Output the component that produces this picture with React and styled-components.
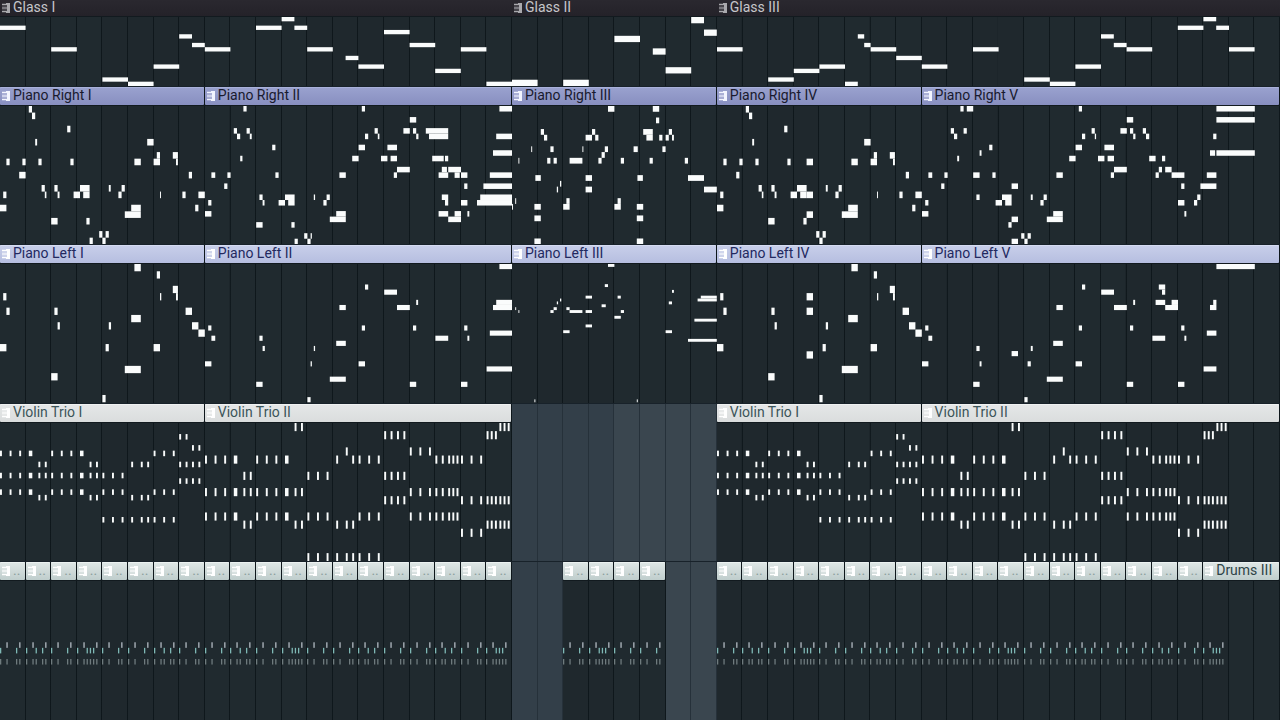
import React from "react";
import styled, { createGlobalStyle } from "styled-components";

const BARS = 50;
const STEPS_PER_BAR = 8;

const GlobalStyle = createGlobalStyle`
  * { box-sizing: border-box; }
  body { margin: 0; background: #333f49; }
`;

/* ---------- note data: [step, row, length in steps] ---------- */

const glass1 = [
  [0, 2, 8], [16, 7, 8], [32, 14, 8], [40, 15, 8], [48, 11, 8], [56, 4, 4], [60, 6, 4], [64, 7, 8],
  [80, 2, 8], [88, 0, 4], [92, 2, 4], [96, 7, 8], [108, 9, 4], [112, 11, 8], [120, 3, 8], [128, 6, 8],
  [136, 12, 8], [144, 7, 8], [152, 15, 8],
];

const glass2 = [
  [0, 10, 8], [16, 10, 8], [32, 3, 8], [44, 5, 4], [48, 8, 8], [56, 0, 4], [60, 2, 4],
];

const glass3 = [
  [0, 7, 8], [16, 14, 8], [24, 12, 8], [32, 11, 8], [40, 15, 4], [44, 4, 2], [46, 6, 2], [48, 7, 8],
  [56, 9, 8], [64, 11, 8], [80, 7, 8], [96, 14, 8], [104, 15, 8], [112, 11, 8], [120, 4, 4], [124, 6, 4],
  [128, 7, 8], [144, 2, 8], [152, 0, 4], [156, 2, 4], [160, 7, 8],
];

const rightTheme = [
  [9, 0], [10, 1], [21, 3], [11, 5, 0.6], [46, 5, 2], [2, 8], [7, 8], [12, 8], [22, 8], [42, 8, 2],
  [49, 7], [48, 8, 2], [54, 7, 1.6], [55, 8, 0.6], [59, 10], [13, 12], [14, 13, 0.5], [17, 12],
  [18, 13, 0.6], [25, 12, 3], [26, 13, 2], [23, 13, 2], [34, 12, 0.6], [38, 12], [37, 13], [1, 13],
  [50, 13, 0.3], [57, 13], [62, 13, 2], [0, 15, 2], [61, 15], [41, 15, 3], [39, 16, 5], [16, 17, 2],
  [27, 17], [31, 19], [33, 19], [32, 20],
];
const right1 = [...rightTheme, [6, 10, 2], [28, 20]];
const right4 = [...rightTheme, [6, 10], [28, 8, 2], [28, 13, 2], [28, 16, 2]];

const right2 = [
  [12, 0], [9, 4], [10, 5], [13, 4], [14, 5, 0.6], [21, 7], [11, 9, 0.7], [2, 12, 1.2], [7, 12], [22, 12],
  [6, 14], [17, 16], [18, 17, 0.6], [25, 16, 3], [26, 17, 2], [23, 17, 2], [34, 16, 0.4], [1, 17],
  [0, 19, 2], [16, 21, 2], [27, 21], [31, 23], [33, 23, 0.4], [32, 24], [28, 24],
  [38, 16], [37, 17], [41, 19, 3], [39, 20, 5], [42, 12, 2], [46, 9, 2], [48, 7, 2], [49, 0], [50, 5],
  [53, 4], [54, 5, 0.5], [55, 9, 2], [58, 9, 2], [57, 7, 3], [60, 11, 4], [59, 12], [62, 4, 2],
  [64, 2, 2], [65, 4], [66, 5, 0.7], [69, 4, 7], [70, 5, 6], [71, 9, 3.6], [75, 9], [74, 11, 1.6],
  [76, 11, 4], [73, 12, 3], [78, 12, 1.6], [80, 12, 2], [81, 14], [74, 16, 2], [75, 17], [80, 17, 2],
  [73, 19, 3], [78, 19, 2], [76, 20, 4], [82, 19, 0.6], [92, 0, 4], [91, 5, 5], [90, 8, 6], [89, 12, 7],
  [87, 14, 9], [86, 16, 10], [85, 17, 11],
];

const right3 = [
  [30, 0, 2], [44, 0, 2], [45, 2], [9, 4], [10, 5], [25, 4], [23, 5, 2], [26, 5], [41, 4, 3], [42, 5, 2],
  [46, 5], [49, 4], [48, 5], [50, 5, 0.6], [6, 7, 0.3], [12, 7], [22, 7, 0.3], [29, 7], [38, 7, 1.3],
  [47, 7], [28, 8], [2, 9, 0.3], [11, 9], [13, 9], [18, 9, 4], [27, 9], [34, 9], [43, 9], [54, 9],
  [7.3, 12, 1.7], [23, 12, 2], [39.2, 12, 1.7], [55, 12, 5], [15, 13, 0.4], [14, 14, 0.4], [23, 14, 2],
  [60, 14, 4], [1, 16, 0.3], [17, 16], [16, 17, 2], [33, 16], [32, 17, 2], [0, 17, 0.3], [7, 17, 2],
  [7, 19, 2], [7, 23, 2], [39, 17, 2], [39, 19, 2], [39, 23, 2],
];

const right5 = [
  [12, 0], [14, 0, 2], [9, 4], [10, 5], [13, 4], [21, 7], [18, 8, 0.6], [11, 9, 0.6], [2, 12, 1.2],
  [7, 12], [16, 12, 2], [22, 12], [6, 14], [17, 16], [1, 17], [23, 17, 2], [0, 19, 2], [25, 16, 3],
  [26, 17, 2], [28, 14, 2], [34, 16, 0.6], [38, 16], [37, 17], [41, 19, 3], [39, 20, 5], [28, 20, 2],
  [27, 21], [31, 23], [33, 23], [32, 24], [28, 24, 2], [42, 12, 2], [46, 9, 2], [48, 7, 2], [49, 0],
  [50, 5], [53, 4], [54, 5, 0.4], [55, 9, 2], [58, 9, 2], [57, 7, 3], [60, 11, 4], [59, 12], [62, 4, 2],
  [64, 2, 2], [65, 4], [66, 5, 0.7], [69, 4], [70, 5], [71, 9, 2], [75, 9], [74, 11], [73, 12],
  [76, 11, 2], [78, 12, 2], [80, 12, 2], [81, 14], [80, 17, 2], [82, 19, 0.6], [86, 16], [85, 17],
  [87, 14, 5], [89, 12, 3], [91, 5], [90, 8, 1.6], [92, 0, 12], [92, 2, 12], [92, 8, 12],
];

const left1 = [
  [42, 0, 2], [49, 1], [54, 3, 1.6], [55, 4, 0.6], [1, 4], [50, 4, 0.4], [2, 6], [17, 6], [58, 6, 2],
  [41, 7, 3], [18, 8, 0.7], [34, 8, 0.7], [60, 8, 2], [62, 9, 2], [0, 11, 2], [33, 11], [48, 11, 2],
  [39, 14, 5], [16, 15, 2], [32, 18],
];
const left4 = [...left1, [28, 4, 2], [28, 6, 2], [28, 12, 2]];

const leftTheme = [
  [1, 12], [2, 14, 1.2], [0, 19, 2], [16, 23, 2], [32, 26], [50, 4], [56, 5, 4], [42, 8, 2], [60, 8, 4],
  [66, 7, 0.6], [49, 12], [65, 12], [41, 15, 3], [72, 14, 4], [81, 12], [82, 14, 0.6], [48, 19, 2],
  [39, 22, 5], [64, 23, 2], [80, 23, 2],
];
const left2 = [
  ...leftTheme, [17, 14], [18, 16, 0.7], [34, 16, 0.4], [33, 19, 0.4], [92, 0, 4], [91, 7, 5],
  [90, 8, 6], [89, 13, 7], [88, 20, 8],
];
const left5 = [
  ...leftTheme, [17, 16], [18, 19, 0.6], [34, 16, 0.6], [33, 19], [28, 17, 2], [74, 4, 2], [75, 5],
  [73, 7, 3], [78, 7, 2], [76, 8, 4], [91, 7], [90, 8, 2], [89, 13, 3], [88, 20, 4], [92, 0, 12],
];

const left3 = [
  [30, 0, 2], [29, 7], [50, 9, 0.6], [23, 11, 2], [33, 11], [59, 11, 5], [58, 12, 6], [15, 12, 0.4],
  [14, 13, 0.4], [49, 13], [28, 14, 1.3], [1, 15, 0.3], [13, 15], [17, 15], [2, 16, 0.3], [12, 16],
  [18, 16, 4], [23, 16, 2], [34, 16], [32, 18, 2], [57, 19, 7], [23, 21, 2], [16, 23, 2], [48, 23, 2],
  [55, 26, 9], [7, 47, 0.3], [39, 47, 0.3],
];

/* Short bowed strokes; the ones on steps 9 and 25 are held longer. */
const strokes = (rows) =>
  Object.entries(rows).flatMap(([row, steps]) =>
    steps.map((step) => [step, Number(row), step === 9 || step === 25 ? 1.1 : 0.6])
  );

const violin1 = strokes({
  2: [56, 58],
  4: [60, 62],
  5: [0, 3, 6, 9, 16, 19, 22, 25, 48, 51, 54],
  7: [12, 14, 28, 30, 41, 44, 46, 56, 58, 60, 62],
  9: [0, 3, 6, 9, 12, 14, 16, 19, 22, 25, 28, 30, 32, 35, 38],
  10: [56, 58, 60, 62],
  12: [0, 3, 6, 9, 16, 19, 22, 25, 32, 35, 38, 48, 51, 54],
  13: [12, 14, 28, 30, 41, 44, 46],
  17: [32, 35, 38, 41, 44, 46, 48, 51, 54],
});

const violin2 = strokes({
  0: [28, 30, 92, 93.3, 94.6],
  1: [56, 58, 60, 62, 88, 89.3, 90.6],
  3: [44, 64, 67, 70],
  4: [0, 3, 6, 9, 16, 19, 22, 25, 41, 46, 48, 51, 54, 72, 74, 76, 77.3, 78.6, 80, 83, 86],
  6: [12, 14, 32, 35, 38, 56, 58, 60, 62],
  8: [0, 3, 6, 9, 12, 14, 16, 19, 22, 25, 28, 30, 64, 67, 70, 72, 74, 76, 77.3, 78.6],
  9: [56, 58, 60, 62, 80, 83, 86, 88, 89.3, 90.6, 92, 93.3, 94.6],
  11: [0, 3, 6, 9, 16, 19, 22, 25, 32, 35, 38, 48, 51, 54, 64, 67, 70, 72, 74, 76, 77.3, 78.6],
  12: [12, 14, 28, 30, 41, 44, 46, 88, 89.3, 90.6, 92, 93.3, 94.6],
  13: [80, 83, 86],
  16: [32, 35, 38, 41, 44, 46, 48, 51, 54],
});

const SNARE = "#b4bcc4";
const HAT = "#7fb9b6";
const KICK = "#6f7b7e";

const beat = (hats) => [
  ...[2, 6].map((s) => [s, 11, 0.4, SNARE]),
  ...hats.map((s) => [s, 12, 0.4, HAT]),
  ...[...new Set([...hats, 2, 6])].map((s) => [s, 14, 0.4, KICK]),
];
const BEATS = {
  a: beat([0, 5]),
  b: beat([0, 3, 5]),
  c: beat([0, 3, 4, 5]),
};

const drumRun = (start, pattern) =>
  [...pattern].map((key, i) => ({
    name: "..",
    start: start + i,
    bars: 1,
    rows: 25,
    notes: BEATS[key],
    faint: true,
  }));

/* ---------- tracks ---------- */

const TONES = {
  glass: { top: "#2a282f", bottom: "#242229", edge: "#2a282f", text: "#c6c6ca", icon: "#a9a9ad" },
  right: { top: "#9aa2cf", bottom: "#888fc0", edge: "#a9b1da", text: "#191a2e", icon: "#f3f5ff" },
  left: { top: "#c8cfea", bottom: "#b6bee0", edge: "#d5dbf1", text: "#232960", icon: "#ffffff" },
  violin: { top: "#e5e7e8", bottom: "#dadddd", edge: "#eff1f1", text: "#3c5559", icon: "#ffffff" },
  drums: { top: "#dfe7e6", bottom: "#bfcdcc", edge: "#ebf1f0", text: "#2f4447", icon: "#ffffff" },
};

const TRACKS = [
  {
    id: "glass",
    clips: [
      { name: "Glass I", start: 0, bars: 20, rows: 16, notes: glass1 },
      { name: "Glass II", start: 20, bars: 8, rows: 11, notes: glass2 },
      { name: "Glass III", start: 28, bars: 22, rows: 16, notes: glass3 },
    ],
  },
  {
    id: "right",
    clips: [
      { name: "Piano Right I", start: 0, bars: 8, rows: 21, notes: right1 },
      { name: "Piano Right II", start: 8, bars: 12, rows: 25, notes: right2 },
      { name: "Piano Right III", start: 20, bars: 8, rows: 24, notes: right3 },
      { name: "Piano Right IV", start: 28, bars: 8, rows: 21, notes: right4 },
      { name: "Piano Right V", start: 36, bars: 14, rows: 25, notes: right5 },
    ],
  },
  {
    id: "left",
    clips: [
      { name: "Piano Left I", start: 0, bars: 8, rows: 19, notes: left1 },
      { name: "Piano Left II", start: 8, bars: 12, rows: 27, notes: left2 },
      { name: "Piano Left III", start: 20, bars: 8, rows: 48, notes: left3 },
      { name: "Piano Left IV", start: 28, bars: 8, rows: 19, notes: left4 },
      { name: "Piano Left V", start: 36, bars: 14, rows: 27, notes: left5 },
    ],
  },
  {
    id: "violin",
    clips: [
      { name: "Violin Trio I", start: 0, bars: 8, rows: 25, notes: violin1 },
      { name: "Violin Trio II", start: 8, bars: 12, rows: 17, notes: violin2 },
      { name: "Violin Trio I", start: 28, bars: 8, rows: 25, notes: violin1 },
      { name: "Violin Trio II", start: 36, bars: 14, rows: 17, notes: violin2 },
    ],
  },
  {
    id: "drums",
    clips: [
      ...drumRun(0, "abacaabaabacaabaabac"),
      ...drumRun(22, "acaa"),
      ...drumRun(28, "abacaabaabacaabaaba"),
      { name: "Drums III", start: 47, bars: 3, rows: 25, notes: BEATS.c },
    ],
  },
];

/* ---------- parts ---------- */

const Playlist = styled.main`
  display: grid;
  grid-template-rows: 87px repeat(4, minmax(158px, 1fr));
  min-height: 100vh;
  overflow: hidden;
  font-family: Roboto, "Liberation Sans", sans-serif;
  background:
    repeating-linear-gradient(to right, transparent 0 calc(2% - 1px), #26313a calc(2% - 1px) 2%),
    repeating-linear-gradient(to right, #3a464f 0 8%, #333f49 8% 16%);
`;

const Lane = styled.section`
  display: grid;
  grid-template-columns: repeat(${BARS}, minmax(0, 1fr));
  border-bottom: 1px solid #18222a;

  &:last-child {
    border-bottom: 0;
  }
`;

const Clip = styled.article`
  grid-column: ${(p) => p.$start + 1} / span ${(p) => p.$bars};
  grid-row: 1;
  display: flex;
  flex-direction: column;
  min-width: 0;
  background:
    repeating-linear-gradient(
      to right,
      transparent 0 calc(100% / ${(p) => p.$bars} - 1px),
      rgba(6, 14, 18, 0.6) calc(100% / ${(p) => p.$bars} - 1px) calc(100% / ${(p) => p.$bars})
    ),
    rgba(26, 35, 39, 0.8);
`;

const ClipHeader = styled.header`
  display: flex;
  align-items: center;
  gap: 3px;
  flex: none;
  height: ${(p) => (p.$flat ? 16 : 18)}px;
  margin-right: ${(p) => (p.$flat ? 0 : 1)}px;
  padding: 0 2px;
  overflow: hidden;
  border-radius: ${(p) => (p.$flat ? 0 : 1)}px;
  color: ${(p) => p.$tone.text};
  background: linear-gradient(${(p) => p.$tone.top}, ${(p) => p.$tone.bottom});
  box-shadow: inset 0 1px ${(p) => p.$tone.edge};
`;

const ClipName = styled.h2`
  margin: 0;
  padding-bottom: 2px;
  font-size: 14px;
  line-height: 16px;
  font-weight: 400;
  white-space: nowrap;
  color: ${(p) => (p.$faint ? "#8b9d9c" : "inherit")};
`;

const KeysIcon = styled.svg`
  flex: none;
  display: block;
  width: 8px;
  height: 10px;
  color: ${(p) => p.$tone.icon};
`;

const NoteArea = styled.svg`
  display: block;
  flex: 1 1 0;
  width: 100%;
  height: 0;
  min-height: 0;
  border-top: 1px solid #121a1f;
`;

function Keys({ tone }) {
  return (
    <KeysIcon $tone={tone} viewBox="0 0 8 10" fill="currentColor" aria-hidden="true">
      <rect x="0" y="0" width="8" height="10" opacity="0.25" />
      <rect x="0" y="1" width="5" height="1" />
      <rect x="0" y="4.5" width="5" height="1" />
      <rect x="0" y="8" width="5" height="1" />
      <rect x="5" y="0" width="3" height="10" />
      <rect x="4" y="0" width="1" height="2" />
      <rect x="4" y="8" width="1" height="2" />
    </KeysIcon>
  );
}

function PatternClip({ clip, tone, flat }) {
  return (
    <Clip $start={clip.start} $bars={clip.bars}>
      <ClipHeader $tone={tone} $flat={flat}>
        <Keys tone={tone} />
        <ClipName $faint={clip.faint}>{clip.name}</ClipName>
      </ClipHeader>
      <NoteArea
        viewBox={`0 0 ${clip.bars * STEPS_PER_BAR} ${clip.rows}`}
        preserveAspectRatio="none"
        aria-hidden="true"
      >
        {clip.notes.map(([step, row, length = 1, fill = "#fafcfc"], i) => (
          <rect key={i} x={step} y={row} width={length} height="1" fill={fill} />
        ))}
      </NoteArea>
    </Clip>
  );
}

export default function App() {
  return (
    <>
      <GlobalStyle />
      <Playlist>
        {TRACKS.map((track) => (
          <Lane key={track.id}>
            {track.clips.map((clip) => (
              <PatternClip
                key={clip.start}
                clip={clip}
                tone={TONES[track.id]}
                flat={track.id === "glass"}
              />
            ))}
          </Lane>
        ))}
      </Playlist>
    </>
  );
}
